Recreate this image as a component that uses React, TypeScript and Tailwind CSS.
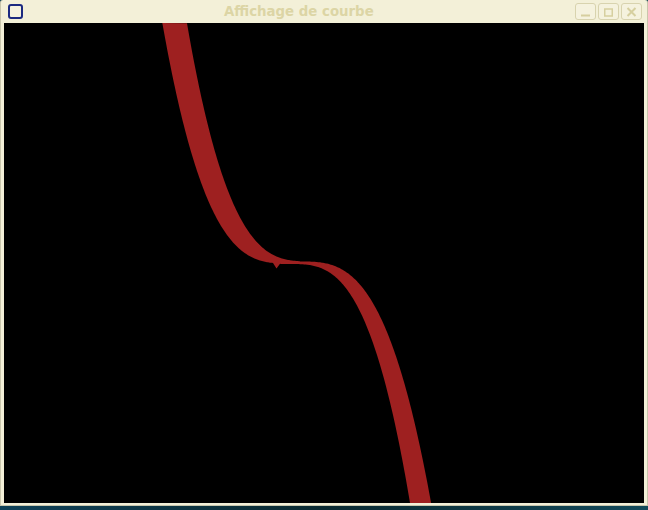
// the curve's four edges are cubics in x, fitted in page pixels
const leftEdge = (x: number) => 263.5 - 1.17e-4 * (289.5 - x) ** 3;
const rightEdge = (x: number) => 261.3 - 1.279e-4 * (310 - x) ** 3;
const lowerLeft = (x: number) => 264 + 1.383e-4 * (x - 290) ** 3;
const lowerRight = (x: number) => 261.5 + 1.072e-4 * (x - 300) ** 3;

function trace(fn: (x: number) => number, from: number, to: number) {
  const pts: string[] = [];
  const step = from < to ? 1 : -1;
  for (let x = from; step > 0 ? x <= to : x >= to; x += step) {
    pts.push(`${x} ${fn(x).toFixed(2)}`);
  }
  return pts.join(' L');
}

const CURVE =
  `M162.3 23 L${trace(leftEdge, 163, 273)} L276.5 268.5 L${trace(lowerLeft, 280, 410)} L410 503 L431 503 ` +
  `L${trace(lowerRight, 431, 300)} L${trace(rightEdge, 300, 187)} Z`;

function WinButton({ children }: { children: React.ReactNode }) {
  return (
    <div className="flex h-[17px] w-[21px] items-center justify-center rounded-[3px] border border-[#d8d3ae] bg-[#f5f2de]">
      <svg width="13" height="13" viewBox="0 0 13 13" fill="none" stroke="#d6cf9f" strokeWidth="2">
        {children}
      </svg>
    </div>
  );
}

export default function App() {
  return (
    <div className="flex h-[510px] w-[648px] flex-col overflow-hidden bg-gradient-to-r from-[#0f4258] via-[#0a2a30] to-[#124a5a]">
      <div className="flex h-[506px] flex-col rounded-t-[3px] border border-t-0 border-[#c9c6ac] bg-[#f3f0d8] px-[3px] pb-[2px]">
        {/* title bar */}
        <div className="relative flex h-[23px] shrink-0 items-center justify-between pl-[4px] pr-[2px]">
          <div className="h-[15px] w-[15px] rounded-[3px] border-2 border-[#1c2a80] bg-[#f5f2de]" />
          <span className="absolute left-[220px] top-[4px] font-['DejaVu_Sans',sans-serif] text-[13.33px] font-bold leading-[16px] text-[#dcd5a5]">
            Affichage de courbe
          </span>
          <div className="flex gap-[2px]">
            <WinButton>
              <path d="M2 10.5h9" />
            </WinButton>
            <WinButton>
              <path d="M2.75 4h7.5v7h-7.5z" strokeWidth="1.5" />
            </WinButton>
            <WinButton>
              <path d="M2.5 3l8 8M10.5 3l-8 8" />
            </WinButton>
          </div>
        </div>
        {/* gl canvas */}
        <div className="h-[480px] w-[640px] shrink-0 bg-black">
          <svg width="640" height="480" viewBox="4 23 640 480" className="block">
            <path fill="#9e2020" d={CURVE} />
          </svg>
        </div>
      </div>
    </div>
  );
}
